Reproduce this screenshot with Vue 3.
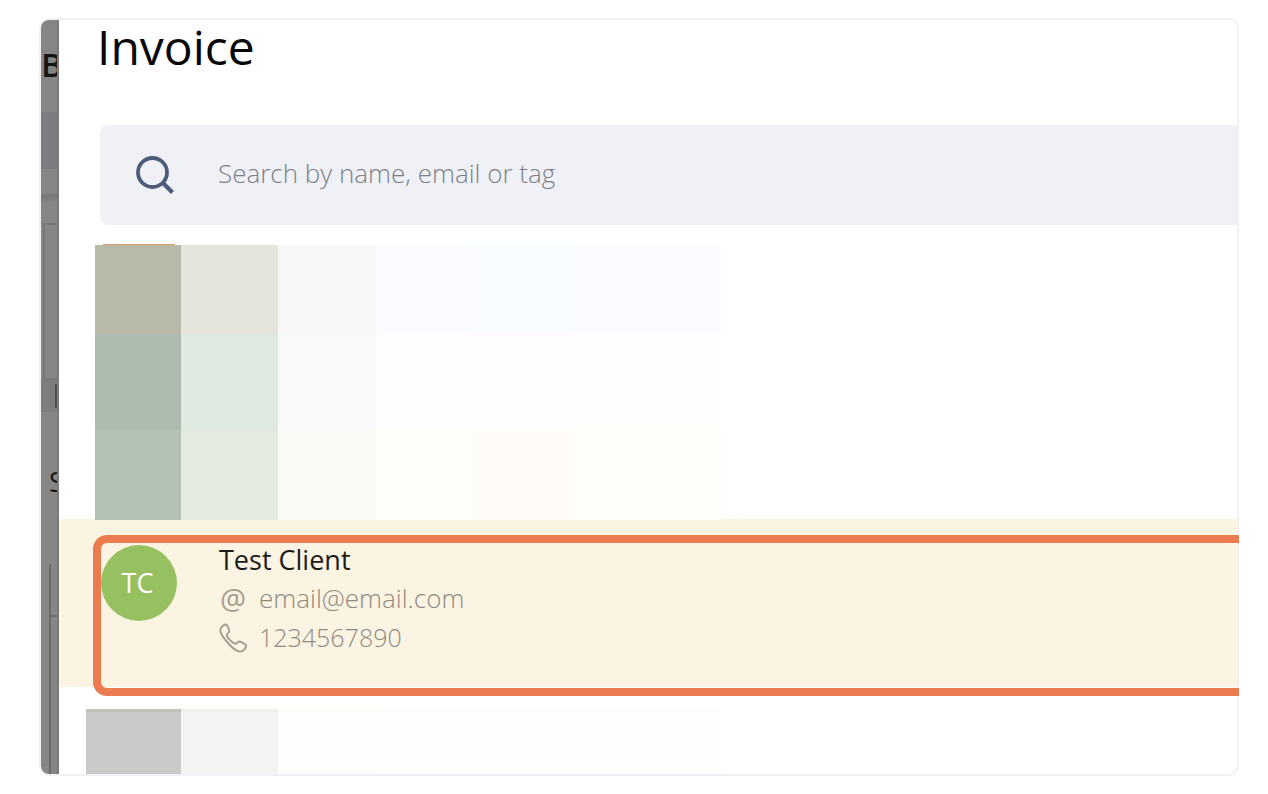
<script setup>
import { ref } from 'vue'

const query = ref('')
const client = { initials: 'TC', name: 'Test Client', email: 'email@email.com', phone: '1234567890' }
</script>

<template>
  <main class="card">
    <div class="backdrop" aria-hidden="true">
      <div class="back-title">B</div>
      <div class="back-band"></div>
      <div class="back-rule"></div>
      <div class="back-box"></div>
      <div class="back-foot"><i></i></div>
      <div class="back-label">S</div>
      <div class="back-table"><i></i></div>
    </div>

    <section class="panel">
      <h1>Invoice</h1>

      <label class="search">
        <svg viewBox="0 0 40 40" fill="none" stroke="#4b5c78" aria-hidden="true">
          <circle cx="17.500" cy="17.500" r="14.500" stroke-width="3.800" />
          <path d="M27.500 27.500 37.500 37.500" stroke-width="4.200" />
        </svg>
        <input v-model="query" type="text" placeholder="Search by name, email or tag" aria-label="Search by name, email or tag" />
      </label>

      <div class="accent"></div>
      <div class="mosaic" aria-hidden="true">
        <i v-for="n in 18" :key="n" :class="'m' + n"></i>
      </div>

      <button type="button" class="client">
        <span class="avatar">{{ client.initials }}</span>
        <span class="details">
          <span class="name">{{ client.name }}</span>
          <span class="line email">
            <span class="at">@</span>
            <span>{{ client.email }}</span>
          </span>
          <span class="line">
            <svg viewBox="0 0 28 30" fill="none" stroke="#a39d92" stroke-width="1.900" stroke-linejoin="round" aria-hidden="true">
              <path d="M1.500 6C2.500 3.500 5.500 1.300 7 1.500c1.500.3 3.300 5 3.200 7-.1 1.600-2.500 2-2.400 3.600.2 2.700 6.200 8.400 8.900 8.700 1.500.2 2-2.400 3.500-2.300 2 .2 6.500 2.700 7 4.200.4 1.600-3 5.300-5 5.800-4 .9-9.700-4.500-13.200-8.500C5 15.700.2 10 1.500 6Z" />
            </svg>
            <span>{{ client.phone }}</span>
          </span>
        </span>
        <span class="focus"></span>
      </button>

      <div class="mosaic-low" aria-hidden="true">
        <i class="l1"></i><i class="l2"></i><i class="l3"></i><i class="l4"></i>
      </div>
    </section>
  </main>
</template>

<style>
body {
  background: #fff;
}
</style>

<style scoped>
* {
  box-sizing: border-box;
}

.card {
  display: flex;
  margin: 18px 29px 18px 39px;
  border: 2px solid #f1f1f4;
  border-radius: 10px;
  background: #fff;
  font-family: "Open Sans", "Noto Sans", sans-serif;
}

/* Dimmed page behind the panel */
.backdrop {
  display: flex;
  flex-direction: column;
  width: 18px;
  flex: none;
  overflow: hidden;
  border-right: 2px solid #7a7a7a;
  border-radius: 8px 0 0 8px;
  background: #868686;
  color: #161616;
}

.back-title {
  height: 92px;
  padding-top: 22px;
  font-size: 33px;
  font-weight: 600;
  line-height: 46px;
}

.back-band {
  height: 57px;
  background: #7b7b80;
}

.back-rule {
  height: 54px;
  background: linear-gradient(#868686 24px, #777 26px, #7b7b7b 29px, #868686 34px);
}

.back-box {
  height: 157px;
  margin-left: 2px;
  border: 2px solid #777;
  border-right: 0;
}

.back-foot {
  display: flex;
  justify-content: flex-end;
  height: 32px;
  padding: 4px 0;
  background: #7d7d7d;
}

.back-foot i {
  width: 2px;
  background: #505050;
}

.back-label {
  height: 152px;
  padding: 52px 0 0 8px;
  font-size: 27px;
  line-height: 36px;
}

.back-table {
  flex: 1;
  margin-left: 8px;
  border-left: 2px solid #6b6b6b;
}

.back-table i {
  display: block;
  height: 53px;
  border-bottom: 2px solid #6b6b6b;
}

.panel {
  flex: 1;
  min-width: 0;
}

h1 {
  margin: 0 0 51px 38px;
  color: #080808;
  font-size: 48px;
  font-weight: 400;
  line-height: 54px;
}

.search {
  display: flex;
  align-items: center;
  height: 100px;
  margin-left: 41px;
  padding-left: 35px;
  border-radius: 8px 0 0 8px;
  background: #f0f1f7;
}

.search svg {
  width: 40px;
  height: 40px;
  flex: none;
}

.search input {
  flex: 1;
  min-width: 0;
  margin-left: 43px;
  padding: 0 0 4px;
  border: 0;
  outline: 0;
  background: transparent;
  color: #333;
  font: 300 26px/40px "Open Sans", "Noto Sans", sans-serif;
}

.search input::placeholder {
  color: #7d7f86;
  opacity: 1;
}

.accent {
  width: 72px;
  height: 1px;
  margin: 19px 0 0 44px;
  background: #d9a066;
}

.mosaic {
  position: relative;
  z-index: 1;
  display: grid;
  grid-template-columns: 86px 97px 98px 97px 96px 152px;
  grid-template-rows: 89px 96px 90px;
  width: 626px;
  margin: 0 0 -1px 36px;
}

.m1 { background: #b9b9a9; }
.m2 { background: #e4e6dc; }
.m3 { background: #f7f7f5; }
.m4 { background: #fafbfe; }
.m5 { background: #fafdff; }
.m6 { background: #fafcff; }
.m7 { background: #adbbae; }
.m8 { background: #dee9e0; }
.m9 { background: #f8faf7; }
.m10 { background: #fdfdfe; }
.m11 { background: #fefcfd; }
.m12 { background: #fefefe; }
.m13 { background: #b3c1b5; }
.m14 { background: #e3ebe0; }
.m15 { background: #f9faf5; }
.m16 { background: #fefdf8; }
.m17 { background: #fffbf8; }
.m18 { background: #fefdf8; }

.client {
  position: relative;
  display: flex;
  align-items: flex-start;
  width: 100%;
  height: 168px;
  padding: 21px 0 0 42px;
  border: 0;
  background: #fcf4e3;
  font-family: inherit;
  text-align: left;
}

.avatar {
  width: 76px;
  height: 76px;
  margin-top: 5px;
  padding-right: 3px;
  border-radius: 50%;
  background: #97c161;
  color: #fff;
  font-size: 27px;
  line-height: 76px;
  text-align: center;
}

.details {
  margin-left: 42px;
  color: #8f8a81;
  font-size: 25px;
  font-weight: 300;
  line-height: 39px;
}

.name {
  display: block;
  color: #1c1b19;
  font-size: 27px;
  font-weight: 400;
}

.line {
  display: flex;
  align-items: center;
  gap: 12px;
}

.email {
  font-size: 26px;
}

.line svg {
  width: 28px;
  height: 30px;
}

.at {
  width: 28px;
  color: #a39d92;
  font-size: 29px;
  font-weight: 400;
  text-align: center;
}

/* Selection frame drawn over the row, open on the right */
.focus {
  position: absolute;
  top: 16px;
  right: -2px;
  bottom: -9px;
  left: 34px;
  border: 8px solid #ec7b50;
  border-right: 0;
  border-radius: 14px 0 0 14px;
}

.mosaic-low {
  display: grid;
  grid-template-columns: 95px 97px 98px 345px;
  width: 635px;
  height: 65px;
  margin: 22px 0 0 27px;
}

.mosaic-low i {
  border-top: 3px solid #fdfdfa;
}

.mosaic-low .l1 {
  border-color: #bfc0b6;
  background: #c9c9c7;
}

.mosaic-low .l2 {
  border-color: #eeefe8;
  background: #f3f3f2;
}

.mosaic-low .l3 {
  background: #fefdfb;
}

.mosaic-low .l4 {
  border-color: #fefdfb;
  background: #fffefc;
}
</style>
